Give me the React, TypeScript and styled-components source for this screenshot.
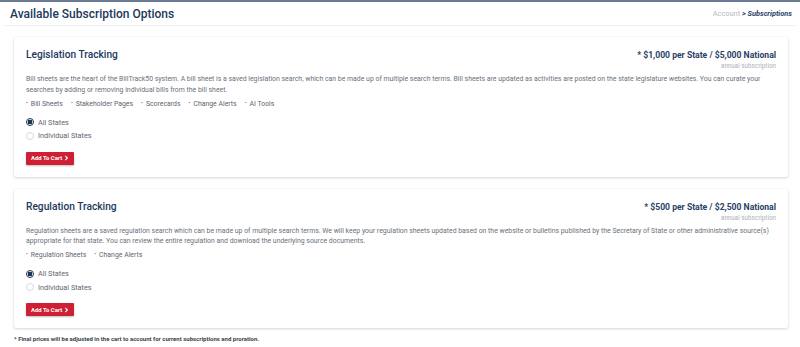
import React from "react";
import styled, { createGlobalStyle } from "styled-components";

const GlobalStyle = createGlobalStyle`
  body {
    margin: 0;
    background: #ffffff;
    font-family: Roboto, "Liberation Sans", Arial, sans-serif;
  }
`;

interface Plan {
  title: string;
  price: string;
  description: string;
  features: string[];
}

const plans: Plan[] = [
  {
    title: "Legislation Tracking",
    price: "* $1,000 per State / $5,000 National",
    description:
      "Bill sheets are the heart of the BillTrack50 system. A bill sheet is a saved legislation search, which can be made up of multiple search terms. Bill sheets are updated as activities are posted on the state legislature websites. You can curate your searches by adding or removing individual bills from the bill sheet.",
    features: ["Bill Sheets", "Stakeholder Pages", "Scorecards", "Change Alerts", "AI Tools"],
  },
  {
    title: "Regulation Tracking",
    price: "* $500 per State / $2,500 National",
    description:
      "Regulation sheets are a saved regulation search which can be made up of multiple search terms. We will keep your regulation sheets updated based on the website or bulletins published by the Secretary of State or other administrative source(s) appropriate for that state. You can review the entire regulation and download the underlying source documents.",
    features: ["Regulation Sheets", "Change Alerts"],
  },
];

function PlanCard({ plan }: { plan: Plan }) {
  return (
    <Card>
      <CardHeader>
        <CardTitle>{plan.title}</CardTitle>
        <PriceBlock>
          <Price>{plan.price}</Price>
          <PriceNote>annual subscription</PriceNote>
        </PriceBlock>
      </CardHeader>
      <Description>{plan.description}</Description>
      <Features>
        {plan.features.map((f) => (
          <Feature key={f}>{f}</Feature>
        ))}
      </Features>
      <Options>
        <Option>
          <Radio checked />
          All States
        </Option>
        <Option>
          <Radio />
          Individual States
        </Option>
      </Options>
      <CartButton>
        Add To Cart
        <svg width="5" height="6" viewBox="0 0 8 10">
          <path d="M2 1.5 L5.5 5 L2 8.5" fill="none" stroke="#fff" strokeWidth="1.8" />
        </svg>
      </CartButton>
    </Card>
  );
}

export default function App() {
  return (
    <Page>
      <GlobalStyle />
      <Header>
        <PageTitle>Available Subscription Options</PageTitle>
        <Breadcrumb>
          <span>Account</span> <b>&gt; Subscriptions</b>
        </Breadcrumb>
      </Header>
      <Main>
        {plans.map((p) => (
          <PlanCard key={p.title} plan={p} />
        ))}
        <Footnote>* Final prices will be adjusted in the cart to account for current subscriptions and proration.</Footnote>
      </Main>
    </Page>
  );
}

const Page = styled.div`
  width: 800px;
  height: 347px;
  overflow: hidden;
  border-top: 2px solid #6b7a93;
  box-sizing: border-box;
`;

const Header = styled.div`
  display: flex;
  justify-content: space-between;
  align-items: center;
  height: 23px;
  margin: 0 4px;
  padding: 0 4px 0 6px;
  border-bottom: 1px solid #eef0f3;
`;

const PageTitle = styled.h1`
  margin: 0;
  font-size: 12px;
  font-weight: 500;
  color: #22395c;
`;

const Breadcrumb = styled.div`
  font-size: 7.4px;
  color: #b4b8bf;
  & > b {
    color: #2a4166;
    font-style: italic;
    font-weight: 700;
  }
`;

const Main = styled.div`
  display: flex;
  flex-direction: column;
  gap: 12px;
  padding: 11px 12px 0 14px;
`;

const Card = styled.div`
  background: #fff;
  border-radius: 2px;
  box-shadow: 0 1px 3px rgba(0, 0, 0, 0.16), 0 0 1px rgba(0, 0, 0, 0.08);
  padding: 12px 12px 12px;
`;

const CardHeader = styled.div`
  display: flex;
  justify-content: space-between;
  align-items: flex-start;
`;

const CardTitle = styled.h2`
  margin: 0;
  font-size: 10.2px;
  line-height: 12px;
  font-weight: 500;
  color: #22395c;
`;

const PriceBlock = styled.div`
  display: flex;
  flex-direction: column;
  align-items: flex-end;
`;

const Price = styled.div`
  font-size: 8.6px;
  line-height: 12px;
  font-weight: 700;
  color: #2a4166;
`;

const PriceNote = styled.div`
  font-size: 6.3px;
  line-height: 10px;
  color: #adb1b8;
`;

const Description = styled.p`
  margin: 3px 0 0;
  font-size: 6.9px;
  line-height: 10.8px;
  color: #6b717b;
`;

const Features = styled.ul`
  display: flex;
  gap: 8px;
  list-style: none;
  margin: 2px 0 0;
  padding: 0;
`;

const Feature = styled.li`
  font-size: 6.9px;
  line-height: 11px;
  color: #5f6570;
  &::before {
    content: "•";
    font-size: 5.5px;
    margin-right: 3px;
    vertical-align: 1px;
  }
`;

const Options = styled.div`
  display: flex;
  flex-direction: column;
  margin-top: 6px;
`;

const Option = styled.label`
  display: flex;
  align-items: center;
  gap: 4px;
  height: 13.5px;
  font-size: 7.3px;
  color: #5f6570;
`;

const Radio = styled.span<{ checked?: boolean }>`
  width: 8px;
  height: 8px;
  border-radius: 50%;
  box-sizing: border-box;
  border: 1px solid ${(p) => (p.checked ? "#1f3556" : "#d6d9de")};
  background: ${(p) => (p.checked ? "radial-gradient(circle, #1f3556 0 2.2px, #fff 2.6px)" : "#fff")};
`;

const CartButton = styled.button`
  display: inline-flex;
  align-items: center;
  gap: 2px;
  margin-top: 9px;
  height: 13px;
  padding: 0 5px 0 5px;
  border: none;
  border-radius: 1px;
  background: #cf1f35;
  color: #fff;
  font-family: inherit;
  font-size: 5.9px;
  font-weight: 700;
  box-shadow: 0 1px 2px rgba(0, 0, 0, 0.25);
`;

const Footnote = styled.p`
  margin: -5px 0 0;
  font-size: 6px;
  font-weight: 700;
  color: #3a3f47;
`;
